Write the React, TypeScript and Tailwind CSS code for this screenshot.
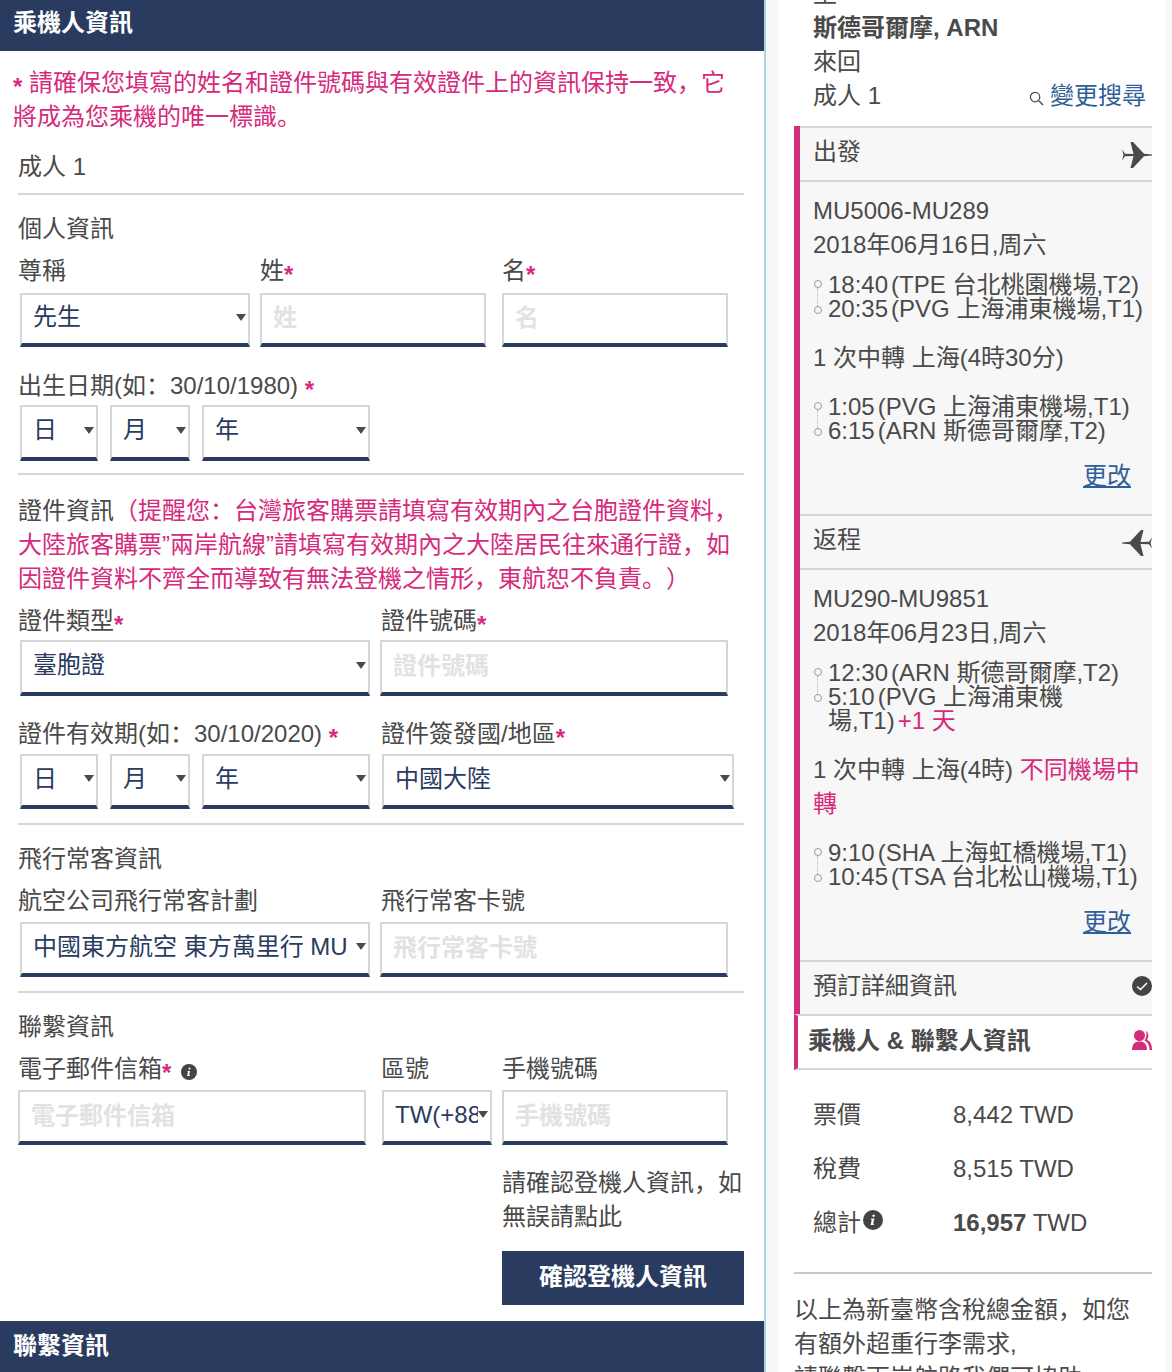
import React from "react";

function Caret() {
  return (
    <svg width="10" height="7" viewBox="0 0 10 7" className="shrink-0">
      <path d="M0 0h10L5 7z" fill="#4a4a4a" />
    </svg>
  );
}

function Sel({ text, className }: { text: string; className: string }) {
  return (
    <div className={"flex items-center border-2 border-b-4 border-[#d6d6d6] border-b-[#293b5f] bg-white pl-[11px] pr-[2px] pb-[4px] text-[#293b5f] shrink-0 " + className}>
      <span className="flex-1 overflow-hidden whitespace-nowrap">{text}</span>
      <Caret />
    </div>
  );
}

function Inp({ ph, className }: { ph: string; className: string }) {
  return (
    <input
      readOnly
      placeholder={ph}
      className={"block border-2 border-b-4 border-[#d6d6d6] border-b-[#293b5f] bg-white pl-[11px] pb-[2px] shrink-0 outline-none placeholder:font-bold placeholder:text-[#e2e2e2] " + className}
    />
  );
}

function Star() {
  return <span className="align-[-4px] font-bold leading-[0] text-[#d62a7c]">*</span>;
}

function Info({ className }: { className: string }) {
  return (
    <svg viewBox="0 0 20 20" className={className}>
      <circle cx="10" cy="10" r="10" fill="#444" />
      <path d="M10.6 4.4a1.3 1.3 0 1 0 .01 0zM8.2 8.6h3.2l-1.3 5.2h1.1l-.3 1.2H7.6l1.2-5.2H7.9z" fill="#fff" />
    </svg>
  );
}

function Plane({ flip }: { flip?: boolean }) {
  return (
    <svg viewBox="0 0 30 26" className={"mt-[2px] h-[26px] w-[30px] shrink-0 " + (flip ? "-scale-x-100" : "")}>
      <path d="M0 7.500l3 4.300 8.500.2L8.500 0H11l11 11.700 8 .7v1.200l-8 .7L11 26H8.500l3-12-8.500.2-3 4.300 1.500-5.500z" fill="#4a4a4a" />
    </svg>
  );
}

function Stops({ children }: { children: React.ReactNode }) {
  return (
    <div className="relative pl-[15px] leading-[24px]">
      <div className="absolute left-0 top-[7px] flex h-[34px] w-[9px] flex-col items-center justify-between">
        <span className="h-[8px] w-[8px] rounded-full border border-[#9a9a9a] bg-[#f7f7f7]" />
        <span className="flex-1 border-l border-dotted border-[#b5b5b5]" />
        <span className="h-[8px] w-[8px] rounded-full border border-[#9a9a9a] bg-[#f7f7f7]" />
      </div>
      {children}
    </div>
  );
}

function Time({ t, children }: { t: string; children: React.ReactNode }) {
  return (
    <div>
      <span className="mr-[3px]">{t}</span>
      {children}
    </div>
  );
}

function SecHead({ title, icon }: { title: string; icon: React.ReactNode }) {
  return (
    <div className="flex h-[56px] items-center justify-between overflow-hidden border-y-2 border-[#d6d6d6] pl-[13px]">
      <span className="pb-[4px]">{title}</span>
      {icon}
    </div>
  );
}

export default function App() {
  return (
    <div className="flex h-[1372px] overflow-hidden bg-[#f7f7f7] font-['Liberation_Sans','Noto_Sans_CJK_SC',sans-serif] text-[24px] leading-[34px] text-[#4a4a4a] [text-spacing-trim:space-all]">
      {/* left */}
      <div className="w-[764px] shrink-0 bg-white">
        <div className="h-[51px] bg-[#293b5f] pl-[13px] font-bold leading-[46px] text-white">乘機人資訊</div>
        <p className="mt-[15px] w-[730px] pl-[13px] text-[#d62a7c]"><Star /> 請確保您填寫的姓名和證件號碼與有效證件上的資訊保持一致，它將成為您乘機的唯一標識。</p>
        <div className="ml-[18px] mt-[16px] w-[726px] border-b-2 border-[#d6d6d6] pb-[9px]">成人 1</div>
        <div className="ml-[18px] mt-[17px]">個人資訊</div>
        <div className="mt-[8px] flex">
          <div className="ml-[18px] w-[242px]">尊稱</div>
          <div className="w-[242px]">姓<Star /></div>
          <div>名<Star /></div>
        </div>
        <div className="mt-[5px] flex pl-[20px]">
          <Sel text="先生" className="h-[54px] w-[230px]" />
          <Inp ph="姓" className="ml-[10px] h-[54px] w-[226px]" />
          <Inp ph="名" className="ml-[16px] h-[54px] w-[226px]" />
        </div>
        <div className="ml-[18px] mt-[22px]">出生日期(如：30/10/1980) <Star /></div>
        <div className="mt-[2px] flex pl-[20px]">
          <Sel text="日" className="h-[56px] w-[78px]" />
          <Sel text="月" className="ml-[12px] h-[56px] w-[80px]" />
          <Sel text="年" className="ml-[12px] h-[56px] w-[168px]" />
        </div>
        <div className="ml-[18px] mt-[12px] h-[2px] w-[726px] bg-[#d6d6d6]" />
        <p className="ml-[18px] mt-[19px] w-[720px]">
          證件資訊<span className="text-[#d62a7c]">（提醒您：台灣旅客購票請填寫有效期內之台胞證件資料，大陸旅客購票”兩岸航線”請填寫有效期內之大陸居民往來通行證，如因證件資料不齊全而導致有無法登機之情形，東航恕不負責。）</span>
        </p>
        <div className="mt-[8px] flex">
          <div className="ml-[18px] w-[363px]">證件類型<Star /></div>
          <div>證件號碼<Star /></div>
        </div>
        <div className="mt-[2px] flex pl-[20px]">
          <Sel text="臺胞證" className="h-[56px] w-[350px]" />
          <Inp ph="證件號碼" className="ml-[10px] h-[56px] w-[348px]" />
        </div>
        <div className="mt-[21px] flex">
          <div className="ml-[18px] w-[363px]">證件有效期(如：30/10/2020) <Star /></div>
          <div>證件簽發國/地區<Star /></div>
        </div>
        <div className="mt-[3px] flex pl-[20px]">
          <Sel text="日" className="h-[55px] w-[78px]" />
          <Sel text="月" className="ml-[12px] h-[55px] w-[80px]" />
          <Sel text="年" className="ml-[12px] h-[55px] w-[168px]" />
          <Sel text="中國大陸" className="ml-[12px] h-[55px] w-[352px]" />
        </div>
        <div className="ml-[18px] mt-[14px] h-[2px] w-[726px] bg-[#d6d6d6]" />
        <div className="ml-[18px] mt-[17px]">飛行常客資訊</div>
        <div className="mt-[8px] flex">
          <div className="ml-[18px] w-[363px]">航空公司飛行常客計劃</div>
          <div>飛行常客卡號</div>
        </div>
        <div className="mt-[4px] flex pl-[20px]">
          <Sel text="中國東方航空 東方萬里行 MU" className="h-[55px] w-[350px]" />
          <Inp ph="飛行常客卡號" className="ml-[10px] h-[55px] w-[348px]" />
        </div>
        <div className="ml-[18px] mt-[14px] h-[2px] w-[726px] bg-[#d6d6d6]" />
        <div className="ml-[18px] mt-[17px]">聯繫資訊</div>
        <div className="mt-[8px] flex">
          <div className="ml-[18px] flex w-[363px] items-center">
            <span>電子郵件信箱<Star /></span>
            <Info className="ml-[10px] mt-[5px] h-[16px] w-[16px]" />
          </div>
          <div className="w-[121px]">區號</div>
          <div>手機號碼</div>
        </div>
        <div className="mt-[4px] flex pl-[18px]">
          <Inp ph="電子郵件信箱" className="h-[55px] w-[348px]" />
          <Sel text="TW(+886)" className="ml-[16px] h-[55px] w-[110px]" />
          <Inp ph="手機號碼" className="ml-[10px] h-[55px] w-[226px]" />
        </div>
        <p className="ml-[502px] mt-[21px] w-[244px]">請確認登機人資訊，如無誤請點此</p>
        <button className="ml-[502px] mt-[17px] block h-[54px] w-[242px] bg-[#293b5f] pb-[3px] font-bold text-white">確認登機人資訊</button>
        <div className="mt-[16px] h-[51px] bg-[#293b5f] pl-[13px] font-bold leading-[50px] text-white">聯繫資訊</div>
      </div>
      {/* right */}
      <div className="w-[2px] shrink-0 bg-[#a6d5e5]" />
      <div className="ml-[12px] h-[1372px] w-[388px] shrink-0 bg-white pl-[16px] pr-[14px]">
        <div className="-mt-[23px] pl-[19px]">
          <div>至</div>
          <div className="font-bold">斯德哥爾摩, ARN</div>
          <div>來回</div>
          <div className="flex items-center justify-between pr-[6px]">
            <span>成人 1</span>
            <span className="flex items-center text-[#2f5f99]">
              <svg viewBox="0 0 16 16" className="mr-[6px] mt-[4px] h-[15px] w-[15px]">
                <circle cx="6.500" cy="6.500" r="5" fill="none" stroke="#4a4a4a" strokeWidth="1.300" />
                <path d="M10.500 10.500L15 15" stroke="#4a4a4a" strokeWidth="1.500" />
              </svg>
              變更搜尋
            </span>
          </div>
        </div>
        <div className="mt-[13px] border-l-[6px] border-[#d22d7e] bg-[#f7f7f7]">
          <SecHead title="出發" icon={<Plane />} />
          <div className="h-[332px] pl-[13px] pt-[12px]">
            <div>MU5006-MU289</div>
            <div>2018年06月16日,周六</div>
            <div className="mt-[11px]">
              <Stops>
                <Time t="18:40">(TPE 台北桃園機場,T2)</Time>
                <Time t="20:35">(PVG 上海浦東機場,T1)</Time>
              </Stops>
            </div>
            <div className="mt-[20px]">1 次中轉 上海(4時30分)</div>
            <div className="mt-[20px]">
              <Stops>
                <Time t="1:05">(PVG 上海浦東機場,T1)</Time>
                <Time t="6:15">(ARN 斯德哥爾摩,T2)</Time>
              </Stops>
            </div>
            <div className="mt-[16px] pr-[21px] text-right text-[#2f5f99] underline">更改</div>
          </div>
          <SecHead title="返程" icon={<Plane flip />} />
          <div className="h-[390px] pl-[13px] pt-[12px]">
            <div>MU290-MU9851</div>
            <div>2018年06月23日,周六</div>
            <div className="mt-[11px] w-[310px]">
              <Stops>
                <Time t="12:30">(ARN 斯德哥爾摩,T2)</Time>
                <div className="w-[250px]">
                  <span className="mr-[3px]">5:10</span>(PVG 上海浦東機場,T1)<span className="ml-[3px] text-[#d62a7c]">+1 天</span>
                </div>
              </Stops>
            </div>
            <div className="mt-[20px] pr-[10px]">1 次中轉 上海(4時) <span className="text-[#d62a7c]">不同機場中轉</span></div>
            <div className="mt-[20px]">
              <Stops>
                <Time t="9:10">(SHA 上海虹橋機場,T1)</Time>
                <Time t="10:45">(TSA 台北松山機場,T1)</Time>
              </Stops>
            </div>
            <div className="mt-[16px] pr-[21px] text-right text-[#2f5f99] underline">更改</div>
          </div>
          <SecHead
            title="預訂詳細資訊"
            icon={
              <svg viewBox="0 0 20 20" className="-mt-[4px] h-[20px] w-[20px] shrink-0">
                <circle cx="10" cy="10" r="10" fill="#444" />
                <path d="M5 10.500l3.500 3L15 7" fill="none" stroke="#fff" strokeWidth="1.500" />
              </svg>
            }
          />
        </div>
        <div className="-mt-[2px] flex h-[56px] items-center justify-between overflow-hidden border-y-2 border-l-4 border-[#d6d6d6] border-l-[#d22d7e] bg-white pl-[10px]">
          <span className="pb-[2px] font-bold">乘機人 &amp; 聯繫人資訊</span>
          <svg viewBox="0 0 20 20" className="-mt-[4px] h-[20px] w-[20px] shrink-0">
            <circle cx="7.500" cy="5.500" r="5.500" fill="#d62a7c" />
            <path d="M0 20c0-6 3-8.500 7.500-8.500S15 14 15 20z" fill="#d62a7c" />
            <path d="M14 1c3 2 3 6 1 9 3 1 5 4 5 10h-2.500c0-5-2-8-5-9.500 2-3 2.500-6.500 1.500-9.500z" fill="#d62a7c" />
          </svg>
        </div>
        <div className="mt-[18px] pl-[19px] leading-[54px]">
          <div className="flex"><span className="w-[140px]">票價</span><span>8,442 TWD</span></div>
          <div className="flex"><span className="w-[140px]">稅費</span><span>8,515 TWD</span></div>
          <div className="flex">
            <span className="flex w-[140px] items-center">總計<Info className="-mt-[6px] ml-[2px] h-[20px] w-[20px]" /></span>
            <span><b>16,957</b> TWD</span>
          </div>
        </div>
        <div className="mt-[22px] h-[2px] bg-[#c8c8cc]" />
        <p className="mt-[19px] w-[340px]">以上為新臺幣含稅總金額，如您<br />有額外超重行李需求,<br />請聯繫兩岸航路我們可協助</p>
      </div>
    </div>
  );
}
